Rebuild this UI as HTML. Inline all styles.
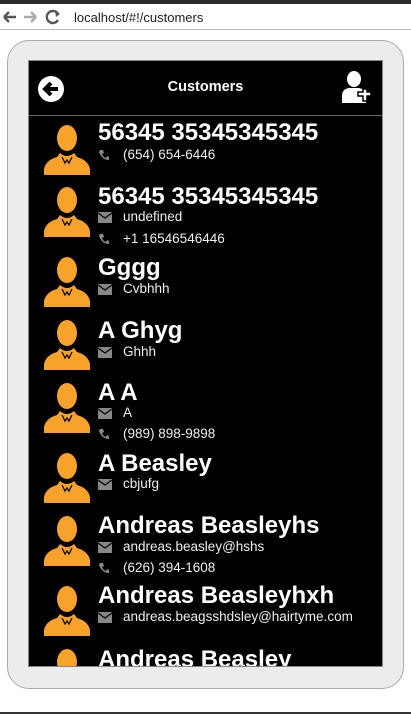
<!DOCTYPE html>
<html><head><meta charset="utf-8"><style>
*{margin:0;padding:0;box-sizing:border-box}
body{width:411px;height:714px;background:#fff;position:relative;overflow:hidden;font-family:"Liberation Sans",sans-serif}
.top{position:absolute;left:0;top:0;width:411px;height:4px;background:#2b2b2b}
.bar{position:absolute;left:0;top:4px;width:411px;height:26px;border-bottom:1px solid #bbb;background:#fff}
.url{position:absolute;left:74px;top:6px;font-size:13px;color:#222}
.frame{position:absolute;left:7px;top:40px;width:397px;height:649px;background:#ececec;border:1px solid #aaa;border-radius:22px}
.scr{position:absolute;left:28px;top:60px;width:355px;height:607px;background:#000;border:1px solid #888;overflow:hidden}
.hdr{position:absolute;left:0;top:0;width:353px;height:55px;border-bottom:1px solid #666}
.title{position:absolute;left:0;width:353px;top:18px;text-align:center;color:#fff;font-size:14.5px;font-weight:bold}
.n{position:absolute;left:69px;color:#fff;font-weight:bold;font-size:24px;line-height:24px;white-space:nowrap}
.d{position:absolute;left:94px;color:#eee;font-size:13.5px;line-height:16px;white-space:nowrap}
.i{position:absolute;left:69px}
.av{position:absolute;left:15px}
.bot{position:absolute;left:0;top:712px;width:411px;height:2px;background:#333}
</style></head><body>
<div class="top"></div>
<div class="bar">
<svg style="position:absolute;left:2px;top:5px" width="60" height="16" viewBox="0 0 60 16">
<path d="M2 8H14M2 8L7 3M2 8L7 13" stroke="#555" stroke-width="2.4" fill="none"/>
<path d="M22 8H34M34 8L29 3M34 8L29 13" stroke="#aaa" stroke-width="2.4" fill="none"/>
<path d="M56 5A6 6 0 1 0 56 11" stroke="#555" stroke-width="2.4" fill="none"/><path d="M53 2L58 5L54 8Z" fill="#555"/>
</svg>
<div class="url">localhost/#!/customers</div></div>
<div class="frame"></div>
<div class="scr">
<div class="hdr">
<svg style="position:absolute;left:8px;top:14px" width="28" height="28" viewBox="0 0 28 28"><circle cx="14" cy="14" r="13" fill="#fff"/><path d="M21 14H9M14 8L8 14L14 20" stroke="#000" stroke-width="4" fill="none"/></svg>
<div class="title">Customers</div>
<svg style="position:absolute;left:312px;top:9px" width="30" height="34" viewBox="0 0 30 34"><ellipse cx="13" cy="9" rx="7" ry="8" fill="#fff"/><path d="M1 33V26Q1 19 8 18H18Q24 19 25 24V33Z" fill="#fff"/><path d="M17 22h5v-3h4v3h4v4h-4v5h-4v-5h-5z" fill="#fff" stroke="#000" stroke-width="1.5"/></svg>
</div>
<svg width="0" height="0" style="position:absolute"><defs>
<symbol id="p" viewBox="0 0 46 50"><ellipse cx="23" cy="13" rx="10" ry="13" fill="#f7a22a"/><path d="M16 28Q23 34 30 28L33 32Q44 35 46 44V50H0V44Q2 35 13 32Z" fill="#f7a22a"/><path d="M18 32L21 38L23 35L25 38L28 32" stroke="#000" stroke-width="1.2" fill="none"/></symbol>
<symbol id="m" viewBox="0 0 14 11"><rect width="14" height="11" fill="#888"/><path d="M0 1L7 6L14 1" stroke="#000" stroke-width="1.3" fill="none"/></symbol>
<symbol id="t" viewBox="0 0 12 12"><path d="M2 1L5 1L6 4L4 5Q5 8 8 9L9 7L11 8L11 11Q4 11 1 3Z" fill="#888"/></symbol>
</defs></svg>
</div>
<div style="position:absolute;left:29px;top:61px;width:353px;height:605px;overflow:hidden">
<svg class="av" style="top:64px" width="46" height="50"><use href="#p"/></svg>
<div class="n" style="top:60px">56345 35345345345</div>
<svg class="i" style="top:88px" width="12" height="12"><use href="#t"/></svg><div class="d" style="top:86px">(654) 654-6446</div>

<svg class="av" style="top:126px" width="46" height="50"><use href="#p"/></svg>
<div class="n" style="top:124px">56345 35345345345</div>
<svg class="i" style="top:151px" width="14" height="11"><use href="#m"/></svg><div class="d" style="top:148px">undefined</div>
<svg class="i" style="top:172px" width="12" height="12"><use href="#t"/></svg><div class="d" style="top:170px">+1 16546546446</div>

<svg class="av" style="top:196px" width="46" height="50"><use href="#p"/></svg>
<div class="n" style="top:195px">Gggg</div>
<svg class="i" style="top:223px" width="14" height="11"><use href="#m"/></svg><div class="d" style="top:220px">Cvbhhh</div>

<svg class="av" style="top:259px" width="46" height="50"><use href="#p"/></svg>
<div class="n" style="top:258px">A Ghyg</div>
<svg class="i" style="top:286px" width="14" height="11"><use href="#m"/></svg><div class="d" style="top:283px">Ghhh</div>

<svg class="av" style="top:322px" width="46" height="50"><use href="#p"/></svg>
<div class="n" style="top:320px">A A</div>
<svg class="i" style="top:347px" width="14" height="11"><use href="#m"/></svg><div class="d" style="top:344px">A</div>
<svg class="i" style="top:367px" width="12" height="12"><use href="#t"/></svg><div class="d" style="top:365px">(989) 898-9898</div>

<svg class="av" style="top:392px" width="46" height="50"><use href="#p"/></svg>
<div class="n" style="top:391px">A Beasley</div>
<svg class="i" style="top:418px" width="14" height="11"><use href="#m"/></svg><div class="d" style="top:415px">cbjufg</div>

<svg class="av" style="top:455px" width="46" height="50"><use href="#p"/></svg>
<div class="n" style="top:453px">Andreas Beasleyhs</div>
<svg class="i" style="top:481px" width="14" height="11"><use href="#m"/></svg><div class="d" style="top:478px">andreas.beasley@hshs</div>
<svg class="i" style="top:501px" width="12" height="12"><use href="#t"/></svg><div class="d" style="top:499px">(626) 394-1608</div>

<svg class="av" style="top:525px" width="46" height="50"><use href="#p"/></svg>
<div class="n" style="top:523px">Andreas Beasleyhxh</div>
<svg class="i" style="top:551px" width="14" height="11"><use href="#m"/></svg><div class="d" style="top:548px">andreas.beagsshdsley@hairtyme.com</div>

<svg class="av" style="top:588px" width="46" height="50"><use href="#p"/></svg>
<div class="n" style="top:587px">Andreas Beasley</div>
</div>
<div class="bot"></div>
</body></html>
